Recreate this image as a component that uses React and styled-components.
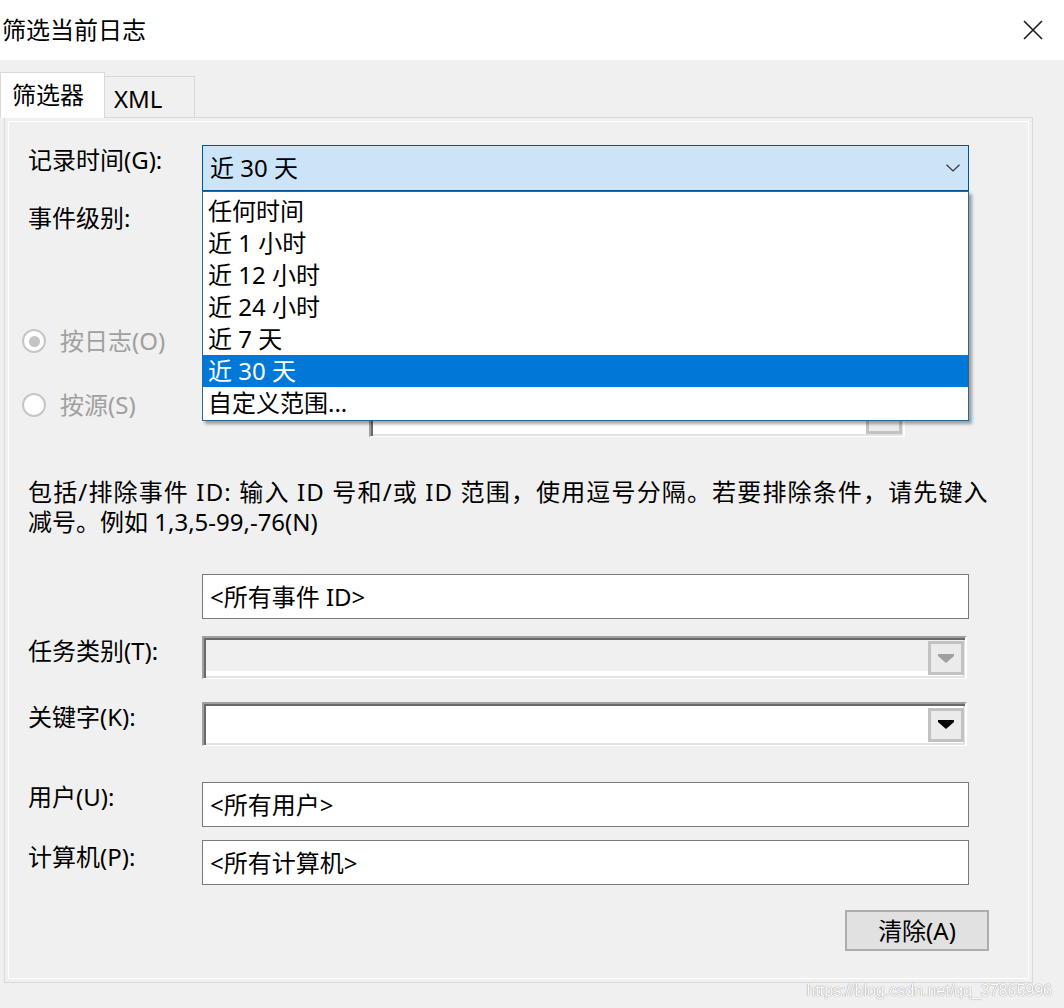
import React from 'react';
import styled, { createGlobalStyle } from 'styled-components';

const FONT = `"Noto Sans", "Noto Sans CJK SC", sans-serif`;

const Global = createGlobalStyle`
  html, body { margin: 0; padding: 0; background: #f0f0f0; }
  body { font-family: ${FONT}; }
  * { box-sizing: border-box; }
`;

const Window = styled.div`
  width: 1064px;
  height: 1008px;
  overflow: hidden;
  background: #f0f0f0;
  display: flex;
  flex-direction: column;
  font-family: ${FONT};
  color: #000;
`;

const TitleBar = styled.div`
  height: 60px;
  flex-shrink: 0;
  background: #fff;
  display: flex;
  align-items: center;
  justify-content: space-between;
  padding: 0 21px 0 2px;
`;

const Title = styled.div`
  font-size: 24px;
  line-height: 30px;
`;

const TabStrip = styled.div`
  display: flex;
  align-items: flex-end;
  height: 58px;
  padding-top: 12px;
  margin-bottom: -1px;
  position: relative;
  z-index: 1;
  flex-shrink: 0;
`;

const Tab = styled.div`
  width: ${p => (p.$active ? 105 : 90)}px;
  height: ${p => (p.$active ? 46 : 41)}px;
  margin-bottom: ${p => (p.$active ? 0 : 1)}px;
  background: ${p => (p.$active ? '#fff' : '#f0f0f0')};
  border: 1px solid #d9d9d9;
  border-bottom: none;
  border-left: ${p => (p.$active ? '1px solid #d9d9d9' : 'none')};
  padding: 7px 0 0 ${p => (p.$active ? 11 : 9)}px;
  font-size: 24px;
  line-height: 30px;
`;

const Panel = styled.div`
  margin-left: 4px;
  width: 1029px;
  height: 866px;
  flex-shrink: 0;
  border: 1px solid #d9d9d9;
  box-shadow: inset 0 0 0 3px #f0f0f0, inset 0 0 0 4px #fff;
  padding: 27px 0 0 23px;
  display: flex;
  flex-direction: column;
`;

const Row = styled.div`
  display: grid;
  grid-template-columns: 174px 767px;
  min-height: ${p => p.$minH || 0}px;
  margin-top: ${p => p.$mt || 0}px;
  position: relative;
  z-index: ${p => p.$z || 0};
`;

const Label = styled.div`
  font-size: 24px;
  line-height: 30px;
  padding-top: ${p => p.$pt || 0}px;
  white-space: nowrap;
`;

const TimeCombo = styled.div`
  position: relative;
  height: 46px;
  background: #cce4f7;
  border: 1px solid #005499;
  display: flex;
  align-items: center;
  justify-content: space-between;
  padding: 0 8px 0 7px;
  font-size: 24px;
  line-height: 30px;
`;

const DropList = styled.div`
  position: absolute;
  top: 45px;
  left: -1px;
  width: 767px;
  background: #fff;
  border: 1px solid #2a679c;
  padding: 3px 0 1px;
  box-shadow: 3px 3px 3px rgba(0, 0, 0, 0.35);
  z-index: 10;
`;

const DropItem = styled.div`
  height: 32px;
  line-height: 32px;
  padding-left: 5px;
  font-size: 24px;
  background: ${p => (p.$selected ? '#0078d7' : 'transparent')};
  color: ${p => (p.$selected ? '#fff' : '#000')};
  white-space: nowrap;
`;

const RadioRow = styled.div`
  display: grid;
  grid-template-columns: 341px 536px;
  margin-top: ${p => p.$mt || 0}px;
`;

const Radio = styled.div`
  display: flex;
  align-items: center;
  gap: 14px;
  margin-left: -6px;
  height: 30px;
  font-size: 24px;
  line-height: 30px;
  color: #a0a0a0;
  white-space: nowrap;
`;

const RadioCircle = styled.span`
  width: 24px;
  height: 24px;
  border-radius: 50%;
  border: 2px solid #c6c6c6;
  background: #fff;
  display: flex;
  align-items: center;
  justify-content: center;
  &::after {
    content: '';
    display: ${p => (p.$checked ? 'block' : 'none')};
    width: 11px;
    height: 11px;
    border-radius: 50%;
    background: #c4c4c4;
  }
`;

const SunkenCombo = styled.div`
  width: ${p => p.$w}px;
  height: ${p => p.$h}px;
  margin-top: ${p => p.$mt || 0}px;
  border-style: solid;
  border-width: 2px 2px 1px 2px;
  border-color: #a0a0a0 #fff #fff #a0a0a0;
  box-shadow: inset 2px 2px 0 #696969, inset -2px -2px 0 #e3e3e3;
  background: ${p =>
    p.$disabled ? 'linear-gradient(#f0f0f0 calc(100% - 7px), #fff calc(100% - 7px))' : '#fff'};
  display: flex;
  align-items: center;
  justify-content: flex-end;
  padding: 0 1px 0 4px;
`;

const DropBtn = styled.div`
  width: 36px;
  height: 34px;
  border: 3px solid #c2c2c2;
  background: #ebebeb;
  display: flex;
  align-items: center;
  justify-content: center;
  color: ${p => (p.$disabled ? '#a0a0a0' : '#000')};
`;

const Description = styled.div`
  margin-top: 40px;
  font-size: 24px;
  line-height: 30px;
  white-space: nowrap;
`;

const DescLine = styled.div`
  letter-spacing: ${p => p.$ls || 0}px;
`;

const TextBox = styled.div`
  width: 767px;
  height: 45px;
  background: #fff;
  border: 1px solid #7a7a7a;
  padding-left: 7px;
  display: flex;
  align-items: center;
  font-size: 24px;
  line-height: 30px;
  white-space: nowrap;
`;

const ButtonRow = styled.div`
  display: flex;
  justify-content: flex-end;
  margin-top: 25px;
  padding-right: 43px;
`;

const Button = styled.button`
  width: 144px;
  height: 41px;
  background: #e1e1e1;
  border: 2px solid #adadad;
  font-family: ${FONT};
  font-size: 24px;
  line-height: 30px;
  color: #000;
  padding: 0;
  display: flex;
  align-items: center;
  justify-content: center;
`;

const Footer = styled.div`
  display: flex;
  justify-content: flex-end;
  padding-right: 12px;
  font-family: "Liberation Sans", Arial, sans-serif;
  font-size: 16px;
  line-height: 16px;
  color: #fff;
  text-shadow: 0 0 1px #8a8a8a, 0 0 1px #b0b0b0;
`;

const CloseIcon = () => (
  <svg width="20" height="20" viewBox="0 0 20 20">
    <path d="M1 1L19 19M19 1L1 19" stroke="#1a1a1a" strokeWidth="1.6" fill="none" />
  </svg>
);

const Chevron = () => (
  <svg width="14" height="8" viewBox="0 0 14 8">
    <polyline points="0.5,0.8 7,7 13.5,0.8" stroke="#333" strokeWidth="1.2" fill="none" />
  </svg>
);

const Triangle = () => (
  <svg width="16" height="9" viewBox="0 0 16 9">
    <path d="M0 0H16V2L8 9L0 2Z" fill="currentColor" />
  </svg>
);

const timeOptions = ['任何时间', '近 1 小时', '近 12 小时', '近 24 小时', '近 7 天', '近 30 天', '自定义范围...'];

export default function App() {
  return (
    <>
      <Global />
      <Window>
        <TitleBar>
          <Title>筛选当前日志</Title>
          <CloseIcon />
        </TitleBar>
        <TabStrip>
          <Tab $active>筛选器</Tab>
          <Tab>XML</Tab>
        </TabStrip>
        <Panel>
          <Row $z={5}>
            <Label>记录时间(G):</Label>
            <TimeCombo>
              <span>近 30 天</span>
              <Chevron />
              <DropList>
                {timeOptions.map(o => (
                  <DropItem key={o} $selected={o === '近 30 天'}>{o}</DropItem>
                ))}
              </DropList>
            </TimeCombo>
          </Row>
          <Row $mt={12} $minH={123}>
            <Label>事件级别:</Label>
          </Row>
          <RadioRow>
            <Radio><RadioCircle $checked />按日志(O)</Radio>
            <SunkenCombo $w={536} $h={42} $mt={5}>
              <DropBtn><Triangle /></DropBtn>
            </SunkenCombo>
          </RadioRow>
          <RadioRow $mt={17}>
            <Radio><RadioCircle />按源(S)</Radio>
            <SunkenCombo $w={536} $h={42} $mt={5}>
              <DropBtn><Triangle /></DropBtn>
            </SunkenCombo>
          </RadioRow>
          <Description>
            <DescLine $ls={1.15}>包括/排除事件 ID: 输入 ID 号和/或 ID 范围，使用逗号分隔。若要排除条件，请先键入</DescLine>
            <DescLine>减号。例如 1,3,5-99,-76(N)</DescLine>
          </Description>
          <Row $mt={37}>
            <span />
            <TextBox>&lt;所有事件 ID&gt;</TextBox>
          </Row>
          <Row $mt={17}>
            <Label>任务类别(T):</Label>
            <SunkenCombo $w={765} $h={43} $disabled>
              <DropBtn $disabled><Triangle /></DropBtn>
            </SunkenCombo>
          </Row>
          <Row $mt={23}>
            <Label>关键字(K):</Label>
            <SunkenCombo $w={765} $h={44}>
              <DropBtn><Triangle /></DropBtn>
            </SunkenCombo>
          </Row>
          <Row $mt={36}>
            <Label>用户(U):</Label>
            <TextBox>&lt;所有用户&gt;</TextBox>
          </Row>
          <Row $mt={13}>
            <Label $pt={2}>计算机(P):</Label>
            <TextBox>&lt;所有计算机&gt;</TextBox>
          </Row>
          <ButtonRow>
            <Button>清除(A)</Button>
          </ButtonRow>
        </Panel>
        <Footer>https://blog.csdn.net/qq_37865996</Footer>
      </Window>
    </>
  );
}
